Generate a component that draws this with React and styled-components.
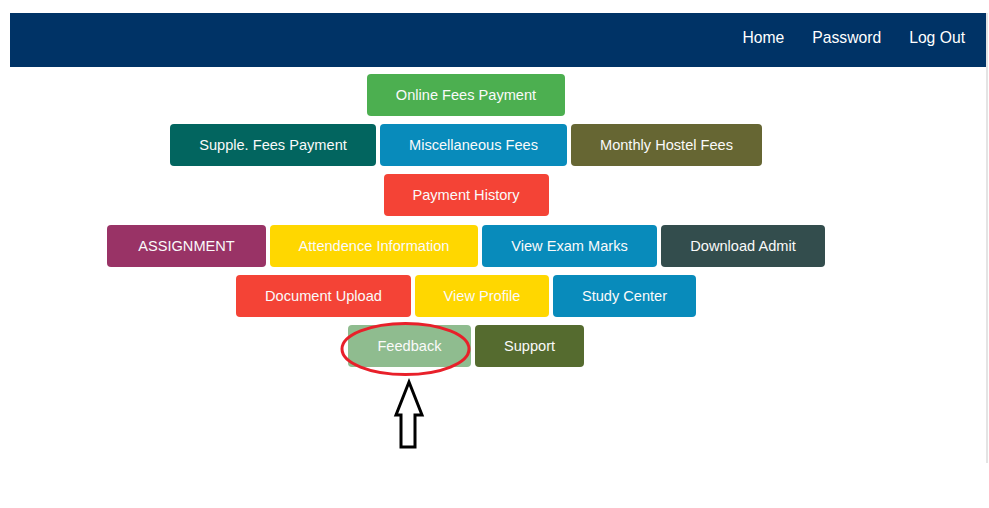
import React from 'react';
import styled, { createGlobalStyle } from 'styled-components';

const GlobalStyle = createGlobalStyle`
  html, body {
    margin: 0;
    background: #fff;
    font-family: "Liberation Sans", Arial, sans-serif;
  }
`;

const Page = styled.div`
  padding: 13px 0 0 10px;
`;

const Frame = styled.div`
  width: 976px;
  height: 450px;
  border-right: 2px solid #e4e4e4;
`;

const NavBar = styled.header`
  height: 54px;
  background: #003366;
  display: flex;
  justify-content: flex-end;
  align-items: center;
  gap: 28px;
  padding-right: 21px;
`;

const NavLink = styled.a`
  color: #fff;
  font-size: 15.7px;
  text-decoration: none;
  margin-top: -4px;
`;

const Menu = styled.main`
  width: 912px;
  padding-top: 7px;
  display: flex;
  flex-direction: column;
  gap: 8.2px;
`;

const Row = styled.div`
  position: relative;
  display: flex;
  justify-content: center;
  gap: 4px;
`;

const Tile = styled.a`
  height: 42px;
  width: ${({ w }) => w}px;
  box-sizing: border-box;
  display: flex;
  align-items: center;
  justify-content: center;
  border-radius: 4px;
  background: ${({ bg }) => bg};
  color: #fafafa;
  font-size: 14.6px;
  text-decoration: none;
  white-space: nowrap;
`;

const Callout = styled.svg`
  position: absolute;
  left: 320px;
  top: -4px;
  overflow: visible;
  pointer-events: none;
`;

const rows = [
  [{ label: 'Online Fees Payment', bg: '#4caf50', w: 198 }],
  [
    { label: 'Supple. Fees Payment', bg: '#02655f', w: 206 },
    { label: 'Miscellaneous Fees', bg: '#088bbb', w: 187 },
    { label: 'Monthly Hostel Fees', bg: '#666633', w: 191 }
  ],
  [{ label: 'Payment History', bg: '#f44336', w: 165 }],
  [
    { label: 'ASSIGNMENT', bg: '#993366', w: 159 },
    { label: 'Attendence Information', bg: '#ffd700', w: 208 },
    { label: 'View Exam Marks', bg: '#088bbb', w: 175 },
    { label: 'Download Admit', bg: '#334d4d', w: 164 }
  ],
  [
    { label: 'Document Upload', bg: '#f44336', w: 175 },
    { label: 'View Profile', bg: '#ffd700', w: 134 },
    { label: 'Study Center', bg: '#088bbb', w: 143 }
  ],
  [
    { label: 'Feedback', bg: '#8fbc8f', w: 123 },
    { label: 'Support', bg: '#556b2f', w: 109 }
  ]
];

export default function App () {
  return (
    <Page>
      <GlobalStyle />
      <Frame>
        <NavBar>
          <NavLink href='#'>Home</NavLink>
          <NavLink href='#'>Password</NavLink>
          <NavLink href='#'>Log Out</NavLink>
        </NavBar>
        <Menu>
          {rows.map((row, i) => (
            <Row key={i}>
              {row.map((t) => (
                <Tile key={t.label} href='#' bg={t.bg} w={t.w}>{t.label}</Tile>
              ))}
              {i === rows.length - 1 && (
                <Callout width='150' height='130' viewBox='0 0 150 130'>
                  <ellipse cx='75.5' cy='28' rx='63.5' ry='25.5' fill='none' stroke='#e8202a' strokeWidth='3' />
                  <path
                    d='M79 61 L92 94 L85 94 L85 126 L71 126 L71 94 L66 94 Z'
                    fill='none'
                    stroke='#000'
                    strokeWidth='3'
                    strokeLinejoin='miter'
                  />
                </Callout>
              )}
            </Row>
          ))}
        </Menu>
      </Frame>
    </Page>
  );
}
